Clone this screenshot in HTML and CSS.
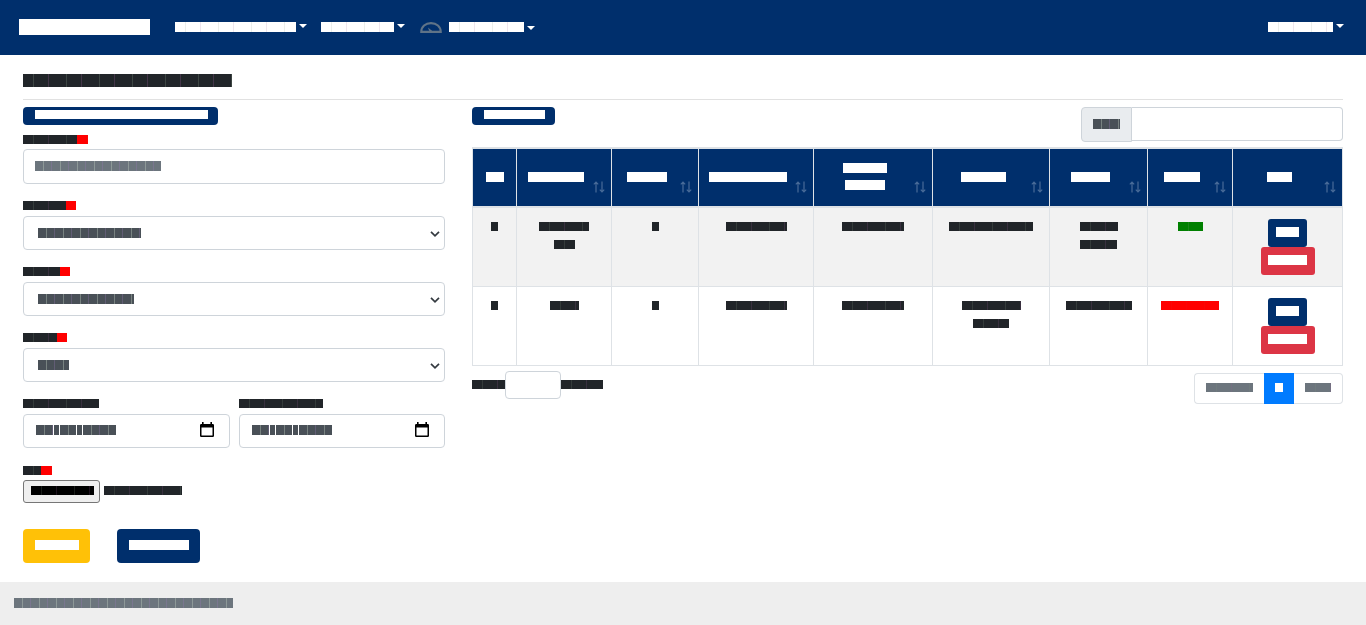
FILE: index.html
```html
<!DOCTYPE html>
<html lang="en">
<head>
<meta charset="utf-8">
<title>Admin</title>
<link rel="stylesheet" href="styles.css">
<script src="app.js" defer></script>
</head>
<body>
<nav class="navbar">
  <a class="brand"><i class="t brand-text" data-w="131.5"></i></a>
  <a class="nav-link first"><i class="t md" data-w="121"></i><b class="caret"></b></a>
  <a class="nav-link second"><i class="t md" data-w="73"></i><b class="caret"></b></a>
  <a class="nav-link third">
    <svg class="gauge" viewBox="0 0 22 11" width="22" height="11"><path d="M1.3 9.8C1.3 4.5 5.5 1.2 11 1.2s9.7 3.3 9.7 8.6Z" fill="none" stroke="#5f7387" stroke-width="2.2"/><path d="M8 5.5l5.5 4.5H9.6Z" fill="#5f7387"/></svg>
    <i class="t md" data-w="75"></i><b class="caret low"></b></a>
  <a class="nav-link user"><i class="t md" data-w="65"></i><b class="caret"></b></a>
</nav>
<main>
  <h1><i class="t lg" data-w="209"></i></h1>
  <div class="columns">
    <form class="editor">
      <div class="badge"><i class="t sm" data-w="172.5"></i></div>
      <div class="field name"><label><i class="t sm" data-w="54"></i><i class="t sm red" data-w="10.5"></i></label>
        <div class="control text"><i class="t md muted" data-w="126"></i></div></div>
      <div class="field"><label><i class="t sm" data-w="43"></i><i class="t sm red" data-w="10"></i></label>
        <div class="control select"><i class="t md slate" data-w="103"></i><svg class="chev" viewBox="0 0 10 6" width="10" height="6"><path d="M1 .8l4 4 4-4"/></svg></div></div>
      <div class="field"><label><i class="t sm" data-w="37"></i><i class="t sm red" data-w="10"></i></label>
        <div class="control select"><i class="t md slate" data-w="95.5"></i><svg class="chev" viewBox="0 0 10 6" width="10" height="6"><path d="M1 .8l4 4 4-4"/></svg></div></div>
      <div class="field"><label><i class="t sm" data-w="34"></i><i class="t sm red" data-w="10"></i></label>
        <div class="control select"><i class="t md slate" data-w="30.5"></i><svg class="chev" viewBox="0 0 10 6" width="10" height="6"><path d="M1 .8l4 4 4-4"/></svg></div></div>
      <div class="dates">
        <div class="field"><label><i class="t sm" data-w="76"></i></label>
          <div class="control date"><span class="parts"><i class="t md slate" data-w="16.5"></i><i class="t md slate" data-w="5"></i><i class="t md slate" data-w="16.5"></i><i class="t md slate" data-w="5"></i><i class="t md slate" data-w="33"></i></span>
          <svg class="cal" viewBox="0 0 14 16" width="14" height="16"><path d="M2 0h1.6v2h6.8V0H12v2h.8Q14 2 14 3.2v10.6Q14 15 12.800 15H1.200Q0 15 0 13.800V3.200Q0 2 1.200 2H2ZM1.500 5.500v8h11v-8Z" fill="#000" fill-rule="evenodd"/></svg></div></div>
        <div class="field"><label><i class="t sm" data-w="83.5"></i></label>
          <div class="control date"><span class="parts"><i class="t md slate" data-w="16.5"></i><i class="t md slate" data-w="5"></i><i class="t md slate" data-w="16.5"></i><i class="t md slate" data-w="5"></i><i class="t md slate" data-w="33"></i></span>
          <svg class="cal" viewBox="0 0 14 16" width="14" height="16"><path d="M2 0h1.6v2h6.8V0H12v2h.8Q14 2 14 3.2v10.6Q14 15 12.800 15H1.200Q0 15 0 13.800V3.200Q0 2 1.200 2H2ZM1.500 5.500v8h11v-8Z" fill="#000" fill-rule="evenodd"/></svg></div></div>
      </div>
      <div class="field file"><label><i class="t sm" data-w="18"></i><i class="t sm red" data-w="10.5"></i></label>
        <div class="picker"><span class="choose"><i class="t sm black" data-w="63"></i></span><i class="t sm" data-w="78"></i></div></div>
      <div class="actions"><span class="btn warning"><i class="t md white" data-w="44"></i></span><span class="btn primary"><i class="t md white" data-w="60"></i></span></div>
    </form>
    <section class="listing">
      <div class="toolbar">
        <div class="badge"><i class="t sm" data-w="60.5"></i></div>
        <div class="search"><span class="addon"><i class="t md slate" data-w="27"></i></span><span class="query"></span></div>
      </div>
      <div class="table" id="table"></div>
      <div class="pager">
        <div class="goto"><i class="t sm" data-w="33"></i><span class="page-input"></span><i class="t sm" data-w="41.5"></i></div>
        <div class="pages"><span class="page prev"><i class="t sm muted" data-w="47.5"></i></span><span class="page active"><i class="t sm white" data-w="7.5"></i></span><span class="page next"><i class="t sm muted" data-w="26.5"></i></span></div>
      </div>
    </section>
  </div>
</main>
<footer><i class="t md muted" data-w="219"></i></footer>
</body>
</html>
```
FILE: styles.css
```css
* { box-sizing: border-box; }
body { margin: 0; min-height: 625px; display: flex; flex-direction: column; background: #fff; color: #212529; font-family: "DejaVu Sans Mono", monospace; overflow: hidden; }

/* Block-glyph text runs */
.t { position: relative; display: block; flex: none; overflow: hidden; background: currentColor; font-style: normal; font-weight: 400; white-space: nowrap; }
.t::after { content: ""; position: absolute; inset: 0; background: repeating-linear-gradient(90deg, transparent 0 10px, rgba(125,145,125,.3) 10px 11px, transparent 11px 25px, rgba(145,90,145,.3) 25px 26px, transparent 26px 33px); }
.sm { height: 9px; font-size: 7.5px; line-height: 9px; }
.md { height: 10px; font-size: 8.5px; line-height: 10px; }
.lg { height: 13px; font-size: 11px; line-height: 13px; }
.brand-text { height: 16px; font-size: 13px; line-height: 16px; }
.brand-text::after, .badge .t::after, .white::after, .head .t::after { display: none; }
.sm::after { opacity: .7; }
.navbar .t::after { opacity: .5; }
.muted { color: #6c757d; }
.slate { color: #495057; }
.muted.md::after, .slate.md::after { background: repeating-linear-gradient(90deg, transparent 0 8px, rgba(190,205,190,.5) 8px 9px, transparent 9px 16px, rgba(150,120,180,.4) 16px 17px); opacity: .8; }
.red { color: #f00; }
.red::after { opacity: .15; }
.green { color: green; }
.black { color: #000; }
.white { color: #fff; }

.navbar { height: 55px; background: #002f6c; color: #fff; display: flex; padding: 0 22px 0 18.5px; }
.brand { padding-top: 19px; margin-right: 24.5px; }
.nav-link { display: flex; align-items: flex-start; padding-top: 22px; }
.caret { margin: 2px 0 0 3px; border: 4.4px solid transparent; border-top-color: #fff; border-bottom: 0; }
.caret.low { margin-top: 4px; }
.second { margin-left: 14.500px; }
.third { margin-left: 14.500px; }
.gauge { margin-right: 7px; }
.user { margin-left: auto; }

main { padding: 19px 23px 0; height: 527px; }
h1 { margin: 0 0 7px; height: 26px; border-bottom: 1px solid #e1e1e1; }
.columns { display: grid; grid-template-columns: 422px 871px; column-gap: 27px; }
.badge { display: flex; width: max-content; height: 18px; padding: 3px 10.5px 0 12px; border-radius: 4px; background: #002f6c; color: #fff; }

.field { margin-bottom: 17px; }
.field label { display: flex; margin-bottom: 6px; }
.control { display: flex; align-items: flex-start; height: 34px; padding: 11px 12px 0 14px; border: 1px solid #ced4da; border-radius: 4px; }
.name { margin-top: 10px; }
.name label { margin-bottom: 5px; }
.control.text { height: 35px; padding-left: 11px; }
.chev { margin: 3px -8px 0 auto; fill: none; stroke: #343a40; stroke-width: 1.7; }
.dates { display: grid; grid-template-columns: 207px 206px; column-gap: 9px; }
.control.date { padding: 10px 15px 0 12px; }
.parts { display: flex; gap: 1px; }
.cal { margin: -3px 0 0 auto; }
.dates .field { margin-bottom: 18px; }
.file { margin-bottom: 26px; }
.file label { margin-bottom: 5px; }
.picker { display: flex; align-items: flex-start; gap: 4px; }
.picker > .t { margin-top: 6px; }
.choose { display: flex; width: 77px; height: 23px; padding: 5px 0 0 6.5px; background: #efefef; border: 1px solid #767676; border-radius: 3px; }
.actions { display: flex; gap: 27px; }
.btn { display: flex; padding: 11px 11.5px 0; height: 34px; border-radius: 4px; }
.warning { background: #ffc107; }
.primary { background: #002f6c; }

.toolbar { display: flex; justify-content: space-between; height: 40px; }
.search { display: flex; width: 262px; }
.addon { width: 51px; height: 35px; padding: 11px 0 0 11px; background: #e9ecef; border: 1px solid #ced4da; border-radius: 4px 0 0 4px; }
.query { flex: 1; height: 34px; border: 1px solid #ced4da; border-left: 0; border-radius: 0 4px 4px 0; }

.table { border-left: 1px solid #dee2e6; }
.row { display: grid; grid-template-columns: 44px 95px 87px 115px 119px 117px 98px 85px 110px; border-bottom: 1px solid #dee2e6; }
.cell { display: flex; flex-direction: column; align-items: center; gap: 9px; padding-top: 14px; height: 78px; border-right: 1px solid #dee2e6; }
.striped { background: #f2f2f2; }
.row.head { border-top: 2px solid #dee2e6; border-bottom-width: 2px; background: #002f6c; color: #fff; }
.head .cell { position: relative; height: 57px; padding: 0 16px 2px 0; gap: 7px; justify-content: center; }
.head .cell:first-child { padding-right: 0; }
.sort { position: absolute; right: 6px; bottom: 13px; }
.sort path { fill: none; stroke: #486b98; stroke-width: 1.2; }
.cell.ops { padding-top: 11px; gap: 0; }
.ops .btn { height: 28px; padding: 8px 7.75px 0; border-radius: 3px; }
.danger { background: #dc3545; }

.pager { display: flex; justify-content: space-between; padding-top: 5px; }
.goto { display: flex; align-items: flex-start; height: 28px; }
.goto .t { margin-top: 9px; }
.page-input { width: 56px; height: 28px; border: 1px solid #ced4da; border-radius: 4px; }
.pages { display: flex; margin-top: 2px; height: 31px; }
.page { display: flex; justify-content: center; padding-top: 9px; border: 1px solid #dee2e6; }
.prev { width: 70px; border-right: 0; border-radius: 4px 0 0 4px; }
.active { width: 30px; background: #007bff; border-color: #007bff; }
.next { width: 49px; border-left: 0; border-radius: 0 4px 4px 0; }

footer { height: 43px; padding: 16px 14px 0; background: #eee; }
```
FILE: app.js
```javascript
const run = (w, cls) => `<i class="t ${cls}" data-w="${w}"></i>`;
const sortIcon = '<svg class="sort" width="12" height="12" viewBox="0 0 12 12"><path d="M3 11.5V1M.8 3.3L3 1l2.2 2.3M9 .5V11M6.8 8.7L9 11l2.2-2.3"/></svg>';

const head = [[18], [56], [40.5], [78], [44.5, 40], [45], [39], [36], [24.5]];
const rows = [
  [[7.5], [50, 21], [7], [61], [61.5], [84], [38, 37], [25]],
  [[7.5], [29], [7], [61], [61.5], [59, 36], [66], [57.5]]
];
const status = ["green", "red"];
const ops = `<div class="cell ops"><span class="btn primary">${run(23.5, "md white")}</span><span class="btn danger">${run(38.5, "md white")}</span></div>`;

let html = '<div class="row head">' + head.map((lines, i) =>
  `<div class="cell">${lines.map(w => run(w, "md")).join("")}${i ? sortIcon : ""}</div>`).join("") + "</div>";
rows.forEach((cells, r) => {
  html += `<div class="row ${r % 2 ? "" : "striped"}">` + cells.map((lines, c) =>
    `<div class="cell">${lines.map(w => run(w, "sm " + (c === 7 ? status[r] : ""))).join("")}</div>`).join("") + ops + "</div>";
});
document.getElementById("table").innerHTML = html;

// Each run is filled with as many block characters as fit its width.
document.querySelectorAll(".t").forEach(el => {
  const w = Number(el.dataset.w);
  const advance = parseFloat(getComputedStyle(el).fontSize) * 0.61;
  el.style.width = w + "px";
  el.textContent = "█".repeat(Math.max(1, Math.floor(w / advance)));
});
```
